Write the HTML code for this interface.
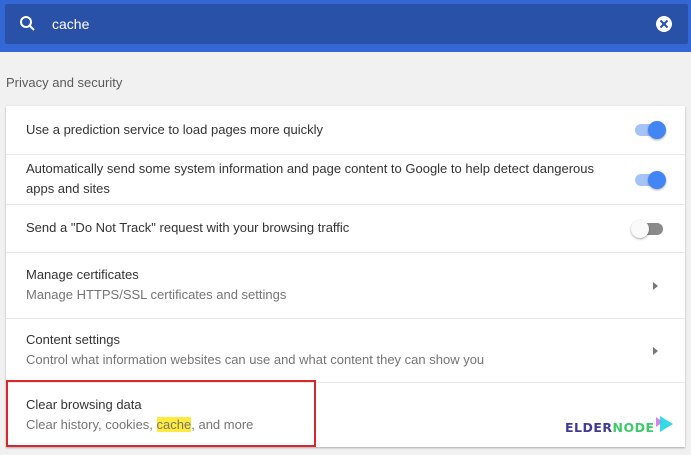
<!DOCTYPE html>
<html><head><style>
*{margin:0;padding:0;box-sizing:border-box}
body{width:691px;height:455px;background:#f1f1f1;font-family:"Liberation Sans",Arial,sans-serif;position:relative;overflow:hidden}
.top{position:absolute;left:0;top:0;width:691px;height:52px;background:#3367d6}
.search{position:absolute;left:5px;top:4px;width:683px;height:40px;background:#2a51a8;border-radius:2px}
.search .t{position:absolute;left:47px;top:12px;color:#fff;font-size:14px}
.h{position:absolute;left:6px;top:75px;font-size:13px;color:#5a5a5a}
.card{position:absolute;left:6px;top:106px;width:679px;height:341px;background:#fff;box-shadow:0 1px 2px rgba(0,0,0,.3)}
.row{position:absolute;left:0;width:679px;border-top:1px solid #e8e8e8}
.row:first-child{border-top:none}
.tx{position:absolute;left:20px;font-size:13px;color:#333;line-height:20px}
.sub{color:#757575}
.tg{position:absolute;left:629px;width:28px;height:12px;border-radius:6px}
.tg.on{background:#a5c3f7}.tg.off{background:#8a8a8a}
.kb{position:absolute;top:-3px;width:18px;height:18px;border-radius:50%;box-shadow:0 1px 2px rgba(0,0,0,.35)}
.on .kb{left:13px;background:#4285f4}.off .kb{left:-4px;background:#fafafa}
.ar{position:absolute;left:647px;width:0;height:0;border-left:5px solid #777;border-top:4px solid transparent;border-bottom:4px solid transparent}
.red{position:absolute;left:6px;top:380px;width:310px;height:67px;border:2px solid #d9262b}
</style></head><body>
<div class="top"><div class="search">
<svg style="position:absolute;left:14px;top:11px" width="18" height="18" viewBox="0 0 18 18"><circle cx="7" cy="7" r="5" fill="none" stroke="#fff" stroke-width="2"/><path d="M10.5 10.5L15 15" stroke="#fff" stroke-width="2"/></svg>
<span class="t">cache</span>
<svg style="position:absolute;left:650px;top:11px" width="18" height="18" viewBox="0 0 18 18"><circle cx="9" cy="9" r="8" fill="#fff"/><path d="M5.5 5.5L12.5 12.5M12.5 5.5L5.5 12.5" stroke="#2a51a8" stroke-width="2"/></svg>
</div></div>
<div class="h">Privacy and security</div>
<div class="card">
<div class="row" style="top:0;height:48px"><div class="tx" style="top:14px">Use a prediction service to load pages more quickly</div><div class="tg on" style="top:18px"><div class="kb"></div></div></div>
<div class="row" style="top:48px;height:50px"><div class="tx" style="top:4px">Automatically send some system information and page content to Google to help detect dangerous<br>apps and sites</div><div class="tg on" style="top:19px"><div class="kb"></div></div></div>
<div class="row" style="top:98px;height:48px"><div class="tx" style="top:13px">Send a "Do Not Track" request with your browsing traffic</div><div class="tg off" style="top:18px"><div class="kb"></div></div></div>
<div class="row" style="top:146px;height:66px"><div class="tx" style="top:12px">Manage certificates<br><span class="sub">Manage HTTPS/SSL certificates and settings</span></div><div class="ar" style="top:29px"></div></div>
<div class="row" style="top:212px;height:64px"><div class="tx" style="top:11px">Content settings<br><span class="sub">Control what information websites can use and what content they can show you</span></div><div class="ar" style="top:28px"></div></div>
<div class="row" style="top:276px;height:65px"><div class="tx" style="top:12px">Clear browsing data<br><span class="sub">Clear history, cookies, <span style="background:#ffeb3b">cache</span>, and more</span></div>
<div style="position:absolute;left:559px;top:37px;font-family:'DejaVu Sans',sans-serif;font-weight:bold;font-size:12.5px;letter-spacing:0.5px"><span style="color:#3f3b96">ELDER</span><span style="color:#3ccb6a">NODE</span></div>
<svg style="position:absolute;left:646px;top:32px" width="22" height="18" viewBox="0 0 22 18"><path d="M4 2L11 7L4 12Z" fill="#d683e8"/><path d="M8 1L21 9L8 17Z" fill="#1fd6e4" opacity=".9"/></svg>
</div>
</div>
<div class="red"></div>
</body></html>
